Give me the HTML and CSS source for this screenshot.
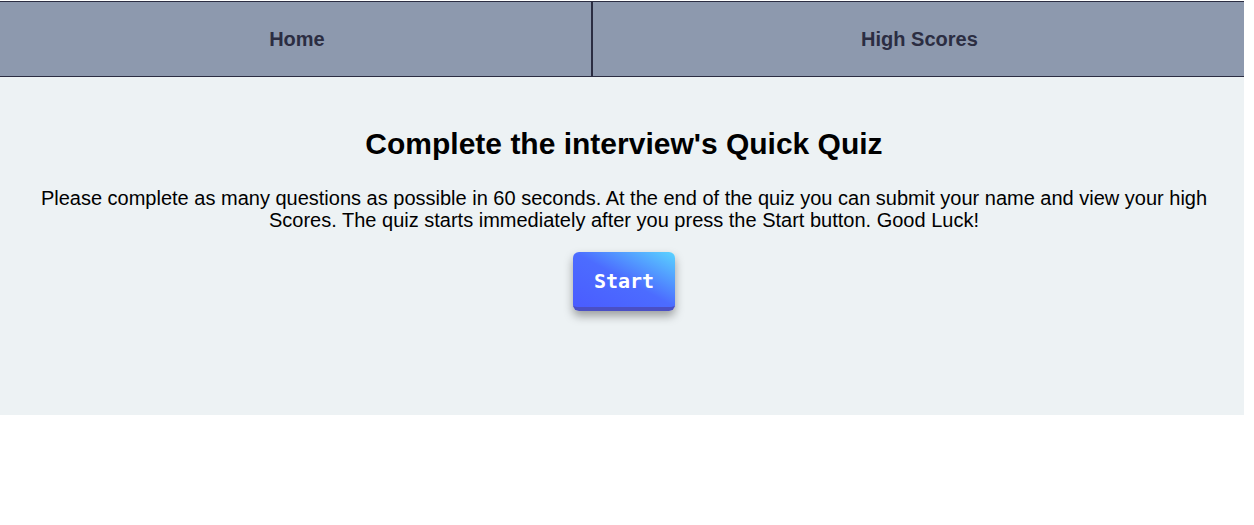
FILE: index.html
```html
<!DOCTYPE html>
<html lang="en">
<head>
<meta charset="utf-8">
<title>Quick Quiz</title>
<link rel="stylesheet" href="styles.css">
</head>
<body>
<div class="page">
  <nav class="nav">
    <a class="nav-link nav-home" href="#">Home</a>
    <a class="nav-link" href="#">High Scores</a>
  </nav>
  <main class="intro">
    <h1 class="title">Complete the interview's Quick Quiz</h1>
    <p class="desc">Please complete as many questions as possible in 60 seconds. At the end of the quiz you can submit your name and view your high Scores. The quiz starts immediately after you press the Start button. Good Luck!</p>
    <button class="start" type="button">Start</button>
  </main>
</div>
</body>
</html>
```
FILE: styles.css
```css
html, body {
  margin: 0;
  padding: 0;
  background: #ffffff;
}
body {
  font-family: "Liberation Sans", Arial, sans-serif;
}
.page {
  margin-right: 10px;
  padding-top: 1px;
}
.nav {
  display: flex;
  background: #8d99ae;
  border-top: 1px solid #2b2d42;
  border-bottom: 1px solid #2b2d42;
  height: 74px;
}
.nav-link {
  flex: 1 1 auto;
  display: flex;
  align-items: center;
  justify-content: center;
  color: #2b2d42;
  font-weight: bold;
  font-size: 20px;
  text-decoration: none;
}
.nav-home {
  padding-left: 3px;
}
.nav-link + .nav-link {
  border-left: 2px solid #2b2d42;
  padding-left: 2px;
}
.intro {
  background: #edf2f4;
  height: 338px;
  display: flex;
  flex-direction: column;
  align-items: center;
  padding: 0 26px 0 30px;
  box-sizing: border-box;
  text-align: center;
}
.title {
  margin: 50px 0 0;
  font-size: 30px;
  line-height: 34px;
  font-weight: bold;
  color: #000;
}
.desc {
  margin: 26px 0 0;
  font-size: 20px;
  line-height: 22px;
  color: #000;
}
.start {
  margin-top: 21px;
  width: 102px;
  height: 59px;
  padding: 3px 0 0;
  border: none;
  border-bottom: 4px solid #4a4fc4;
  border-radius: 6px;
  background: linear-gradient(to top right, #4a5cff 0%, #4c6cff 50%, #5ad4ff 100%);
  color: #ffffff;
  font-family: "DejaVu Sans Mono", monospace;
  font-weight: bold;
  font-size: 20px;
  box-shadow: 0 5px 10px rgba(0, 0, 0, 0.35);
  cursor: pointer;
}
```
